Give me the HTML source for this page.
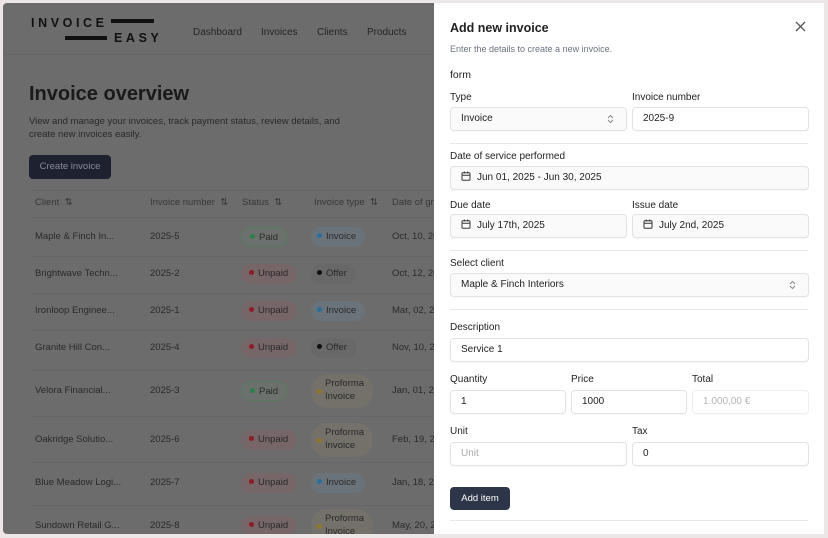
<!DOCTYPE html>
<html><head><meta charset="utf-8">
<style>
*{box-sizing:border-box;margin:0;padding:0}
body{width:828px;height:538px;background:#ece7e6;font-family:"Liberation Sans",sans-serif;position:relative;overflow:hidden}
#page{position:absolute;left:3px;top:3px;width:431px;height:531px;background:#6c6c6c;overflow:hidden;border-radius:4px 0 0 4px}
.a{position:absolute;white-space:nowrap}
.logo{font-weight:700;font-size:12.5px;letter-spacing:3.6px;color:#111;line-height:12px}
.bar{position:absolute;height:3.5px;background:#111}
.nav{font-size:10px;color:#262626;top:24px}
.hl{position:absolute;left:0;width:431px;height:1px;background:#666}
.t{font-size:9.5px;color:#2a2a2a}
.th{font-size:9.5px;color:#383838}
.b{position:absolute;border-radius:12px;font-size:9.5px;color:#2a2a2a;padding:0 9px 0 8px;height:20px;line-height:20px}
.d{display:inline-block;width:5px;height:5px;border-radius:50%;margin-right:4px;vertical-align:1px}
.paid{background:#6c716d;border:1px solid #587a60}
.unpaid{background:#766668}
.inv{background:#6b737a}
.off{background:#686868}
.pro{background:#74706a;line-height:13px;height:34px;padding-top:3px;border-radius:16px}
#panel{position:absolute;left:434px;top:3px;width:390px;height:531px;background:#fff}
.lbl{font-size:10px;color:#222}
.in{position:absolute;height:24px;border:1px solid #e2e2e2;border-radius:4px;font-size:10px;color:#222;line-height:22px;padding-left:10px;background:#fff;box-shadow:0 1px 1px rgba(0,0,0,.03)}
.sel{background:#fafafa}
.sep{position:absolute;left:16px;width:358px;height:1px;background:#e8e8e8}
.cal{display:inline-block;width:10px;height:10px;margin-right:6px;vertical-align:-1px}
.chev{position:absolute;right:12px;top:6px}
</style></head><body>
<div id="page">
  <div class="a logo" style="left:28px;top:14px">INVOICE</div>
  <div class="bar" style="left:108px;top:16px;width:43px"></div>
  <div class="bar" style="left:62px;top:33px;width:42px"></div>
  <div class="a logo" style="left:111px;top:29px">EASY</div>
  <div class="a nav" style="left:190px">Dashboard</div>
  <div class="a nav" style="left:258px">Invoices</div>
  <div class="a nav" style="left:314px">Clients</div>
  <div class="a nav" style="left:364px">Products</div>
  <div class="hl" style="top:51px"></div>
  <div class="a" style="left:26px;top:80px;font-size:20px;font-weight:700;color:#1a1a1a">Invoice overview</div>
  <div class="a" style="left:26px;top:112px;font-size:9.5px;color:#2a2a2a;line-height:13px">View and manage your invoices, track payment status, review details, and<br>create new invoices easily.</div>
  <div class="a" style="left:26px;top:152px;width:82px;height:24px;background:#1e2230;border-radius:4px;color:#8a8d96;font-size:9.5px;line-height:24px;text-align:center">Create invoice</div>
  <div class="a" style="left:28px;top:187px;width:420px;height:1px;background:#666"></div>
  <div class="a th" style="left:32px;top:194px">Client &nbsp;⇅</div>
  <div class="a th" style="left:147px;top:194px">Invoice number &nbsp;⇅</div>
  <div class="a th" style="left:239px;top:194px">Status &nbsp;⇅</div>
  <div class="a th" style="left:311px;top:194px">Invoice type &nbsp;⇅</div>
  <div class="a th" style="left:389px;top:194px">Date of gr</div>
  <div id="rows"></div>
</div>
<div id="panel">
  <div class="a" style="left:16px;top:18px;font-size:12.5px;font-weight:700;color:#222">Add new invoice</div>
  <svg class="a" style="left:361px;top:18px" width="11" height="11" viewBox="0 0 11 11"><path d="M1 1L10 10M10 1L1 10" stroke="#555" stroke-width="1.3" fill="none"/></svg>
  <div class="a" style="left:16px;top:41px;font-size:9px;color:#6b7280">Enter the details to create a new invoice.</div>
  <div class="a" style="left:16px;top:66px;font-size:10.5px;color:#222">form</div>
  <div class="a lbl" style="left:16px;top:89px">Type</div>
  <div class="a lbl" style="left:198px;top:89px">Invoice number</div>
  <div class="in sel" style="left:16px;top:104px;width:177px">Invoice<svg class="chev" width="7" height="10" viewBox="0 0 7 10"><path d="M1 4L3.5 1.5L6 4M1 6L3.5 8.5L6 6" stroke="#888" fill="none"/></svg></div>
  <div class="in" style="left:198px;top:104px;width:177px">2025-9</div>
  <div class="sep" style="top:140px"></div>
  <div class="a lbl" style="left:16px;top:148px">Date of service performed</div>
  <div class="in sel" style="left:16px;top:163px;width:359px"><svg class="cal" viewBox="0 0 10 10"><rect x="1" y="1.8" width="8" height="7.4" rx="1" stroke="#333" fill="none"/><path d="M1 4.2H9M3.3 0.5V2.5M6.7 0.5V2.5" stroke="#333" fill="none"/></svg>Jun 01, 2025 - Jun 30, 2025</div>
  <div class="a lbl" style="left:16px;top:197px">Due date</div>
  <div class="a lbl" style="left:198px;top:197px">Issue date</div>
  <div class="in sel" style="left:16px;top:211px;width:177px"><svg class="cal" viewBox="0 0 10 10"><rect x="1" y="1.8" width="8" height="7.4" rx="1" stroke="#333" fill="none"/><path d="M1 4.2H9M3.3 0.5V2.5M6.7 0.5V2.5" stroke="#333" fill="none"/></svg>July 17th, 2025</div>
  <div class="in sel" style="left:198px;top:211px;width:177px"><svg class="cal" viewBox="0 0 10 10"><rect x="1" y="1.8" width="8" height="7.4" rx="1" stroke="#333" fill="none"/><path d="M1 4.2H9M3.3 0.5V2.5M6.7 0.5V2.5" stroke="#333" fill="none"/></svg>July 2nd, 2025</div>
  <div class="sep" style="top:247px"></div>
  <div class="a lbl" style="left:16px;top:255px">Select client</div>
  <div class="in sel" style="left:16px;top:270px;width:359px">Maple &amp; Finch Interiors<svg class="chev" width="7" height="10" viewBox="0 0 7 10"><path d="M1 4L3.5 1.5L6 4M1 6L3.5 8.5L6 6" stroke="#888" fill="none"/></svg></div>
  <div class="sep" style="top:306px"></div>
  <div class="a lbl" style="left:16px;top:319px">Description</div>
  <div class="in" style="left:16px;top:335px;width:359px">Service 1</div>
  <div class="a lbl" style="left:16px;top:371px">Quantity</div>
  <div class="a lbl" style="left:137px;top:371px">Price</div>
  <div class="a lbl" style="left:258px;top:371px">Total</div>
  <div class="in" style="left:16px;top:387px;width:116px">1</div>
  <div class="in" style="left:137px;top:387px;width:116px">1000</div>
  <div class="in" style="left:258px;top:387px;width:117px;color:#b5b5b5;border-color:#eee">1.000,00 €</div>
  <div class="a lbl" style="left:16px;top:423px">Unit</div>
  <div class="a lbl" style="left:198px;top:423px">Tax</div>
  <div class="in" style="left:16px;top:439px;width:177px;color:#aaa">Unit</div>
  <div class="in" style="left:198px;top:439px;width:177px">0</div>
  <div class="a" style="left:16px;top:484px;width:60px;height:23px;background:#2d3648;border-radius:4px;color:#fff;font-size:9.5px;line-height:23px;text-align:center">Add item</div>
  <div class="sep" style="top:517px"></div>
</div>
<script>
var rows=[
["Maple & Finch In...","2025-5","paid","inv","Oct, 10, 20",234],
["Brightwave Techn...","2025-2","unpaid","off","Oct, 12, 20",271],
["Ironloop Enginee...","2025-1","unpaid","inv","Mar, 02, 20",308],
["Granite Hill Con...","2025-4","unpaid","off","Nov, 10, 20",345],
["Velora Financial...","2025-3","paid","pro","Jan, 01, 20",388],
["Oakridge Solutio...","2025-6","unpaid","pro","Feb, 19, 20",437],
["Blue Meadow Logi...","2025-7","unpaid","inv","Jan, 18, 20",480],
["Sundown Retail G...","2025-8","unpaid","pro","May, 20, 20",523]];
var h="",prev=214;
var sc={paid:["Paid","#2f8048"],unpaid:["Unpaid","#8e1c26"]};
var tc={inv:["Invoice","#2a6f9a"],off:["Offer","#111"],pro:["Proforma<br>Invoice","#927628"]};
rows.forEach(function(r,i){
 var y=r[5];
 h+='<div class="a" style="left:28px;top:'+prev+'px;width:420px;height:1px;background:#666"></div>';
 h+='<div class="a t" style="left:32px;top:'+(y-6)+'px">'+r[0]+'</div>';
 h+='<div class="a t" style="left:147px;top:'+(y-6)+'px">'+r[1]+'</div>';
 var s=sc[r[2]];
 h+='<div class="b '+r[2]+'" style="left:238px;top:'+(y-10)+'px"><span class="d" style="background:'+s[1]+'"></span>'+s[0]+'</div>';
 var t=tc[r[3]];
 if(r[3]=="pro"){h+='<div class="b pro" style="left:308px;top:'+(y-17)+'px;padding-left:14px"><span class="d" style="background:'+t[1]+';position:absolute;left:6px;top:15px"></span>'+t[0]+'</div>';}
 else h+='<div class="b '+r[3]+'" style="left:308px;top:'+(y-10)+'px;padding-left:6px;border-radius:10px"><span class="d" style="background:'+t[1]+'"></span>'+t[0]+'</div>';
 h+='<div class="a t" style="left:389px;top:'+(y-6)+'px">'+r[4]+'</div>';
 prev = i<rows.length-1 ? Math.round((r[5]+rows[i+1][5])/2) : 600;
});
document.getElementById("rows").innerHTML=h;
</script>
</body></html>
